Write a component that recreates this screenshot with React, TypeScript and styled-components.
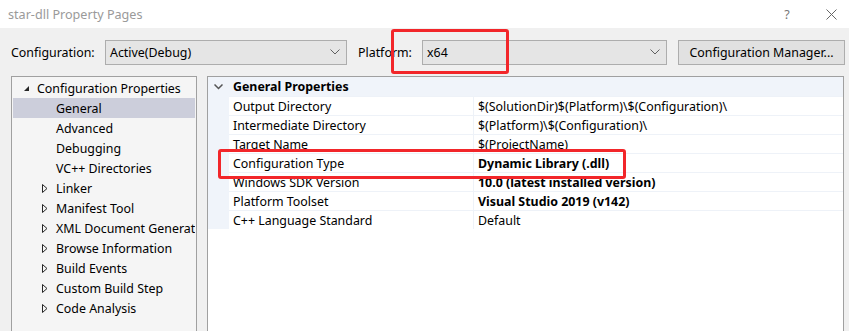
import React from "react";
import styled, { createGlobalStyle } from "styled-components";

const Global = createGlobalStyle`
  html, body { margin: 0; padding: 0; background: #f0f0f0; }
  body { font-family: "Noto Sans", "Open Sans", sans-serif; font-size: 12.4px; color: #000; }
`;

const Window = styled.div`
  position: relative;
  width: 849px;
  height: 331px;
  overflow: hidden;
  background: #f0f0f0;
`;

const TitleBar = styled.div`
  height: 28px;
  background: #fff;
  display: flex;
  align-items: center;
  padding: 0 0 0 8px;
  color: #9a9a9a;
  font-size: 12.6px;
`;

const Title = styled.div`
  flex: 1;
`;

const TitleBtn = styled.div<{ $w: number; $ml?: number }>`
  width: ${(p) => p.$w}px;
  margin-left: ${(p) => p.$ml || 0}px;
  display: flex;
  justify-content: center;
  align-items: center;
  color: #777;
`;

const Toolbar = styled.div`
  height: 48px;
  display: flex;
  align-items: center;
  padding: 0 0 0 11px;
  box-sizing: border-box;
`;

const Label = styled.div<{ $w: number }>`
  width: ${(p) => p.$w}px;
  flex: none;
`;

const Select = styled.div<{ $w: number; $mr: number }>`
  width: ${(p) => p.$w}px;
  margin-right: ${(p) => p.$mr}px;
  height: 25px;
  box-sizing: border-box;
  border: 1px solid #adadad;
  background: #e5e5e5;
  display: flex;
  align-items: center;
  padding: 0 6px 0 4px;
  flex: none;
`;

const SelectText = styled.span`
  flex: 1;
`;

const Button = styled.div`
  width: 167px;
  height: 25px;
  box-sizing: border-box;
  border: 1px solid #adadad;
  background: #e1e1e1;
  display: flex;
  align-items: center;
  justify-content: center;
  flex: none;
`;

const Main = styled.div`
  display: flex;
  gap: 10px;
  padding: 0 5px 0 11px;
`;

const Tree = styled.div`
  width: 186px;
  height: 280px;
  box-sizing: border-box;
  border: 1px solid #a0a0a0;
  background: #f5f5f5;
  padding: 1px 1px 0 1px;
  flex: none;
`;

const TreeRow = styled.div<{ $indent: number; $sel?: boolean }>`
  height: 20px;
  display: flex;
  align-items: center;
  padding-left: ${(p) => p.$indent}px;
  background: ${(p) => (p.$sel ? "#cccedb" : "transparent")};
  white-space: nowrap;
  overflow: hidden;
`;

const Twisty = styled.span`
  width: 14px;
  flex: none;
  display: flex;
  align-items: center;
`;

const Grid = styled.div`
  flex: 1;
  height: 280px;
  box-sizing: border-box;
  border: 1px solid #a0a0a0;
  background: #fff;
  display: grid;
  grid-template-columns: 21px 245px 1fr;
  grid-auto-rows: 19px;
  align-content: start;
`;

const Gutter = styled.div`
  background: #f0f4fa;
  display: flex;
  align-items: center;
  justify-content: center;
`;

const HeaderCell = styled.div`
  grid-column: 2 / 4;
  background: #f0f4fa;
  font-weight: bold;
  display: flex;
  align-items: center;
  padding-left: 4px;
`;

const Cell = styled.div<{ $bold?: boolean; $val?: boolean }>`
  display: flex;
  align-items: center;
  padding-left: 4px;
  box-sizing: border-box;
  border-top: 1px solid #eef2f8;
  border-right: ${(p) => (p.$val ? "none" : "1px solid #eef2f8")};
  font-weight: ${(p) => (p.$bold ? "bold" : "normal")};
  white-space: nowrap;
  overflow: hidden;
`;

const Mark = styled.div<{ $l: number; $t: number; $w: number; $h: number }>`
  position: absolute;
  left: ${(p) => p.$l}px;
  top: ${(p) => p.$t}px;
  width: ${(p) => p.$w}px;
  height: ${(p) => p.$h}px;
  box-sizing: border-box;
  border: 3px solid #f2262a;
  border-radius: 3px;
  pointer-events: none;
`;

const Chevron = () => (
  <svg width="10" height="6" viewBox="0 0 10 6">
    <path d="M0.5 0.5 L5 5 L9.5 0.5" fill="none" stroke="#606060" strokeWidth="1" />
  </svg>
);

const Expanded = () => (
  <svg width="7" height="7" viewBox="0 0 7 7">
    <path d="M6 1 L6 6 L1 6 Z" fill="#262626" />
  </svg>
);

const Collapsed = () => (
  <svg width="6" height="9" viewBox="0 0 6 9">
    <path d="M0.5 0.5 L5 4.5 L0.5 8.5 Z" fill="none" stroke="#262626" strokeWidth="1" />
  </svg>
);

const HeaderChevron = () => (
  <svg width="9" height="6" viewBox="0 0 9 6">
    <path d="M0.5 0.5 L4.5 4.5 L8.5 0.5" fill="none" stroke="#555" strokeWidth="1.5" />
  </svg>
);

const treeChildren: { label: string; expandable: boolean; sel?: boolean }[] = [
  { label: "General", expandable: false, sel: true },
  { label: "Advanced", expandable: false },
  { label: "Debugging", expandable: false },
  { label: "VC++ Directories", expandable: false },
  { label: "Linker", expandable: true },
  { label: "Manifest Tool", expandable: true },
  { label: "XML Document Generator", expandable: true },
  { label: "Browse Information", expandable: true },
  { label: "Build Events", expandable: true },
  { label: "Custom Build Step", expandable: true },
  { label: "Code Analysis", expandable: true },
];

const props: { name: string; value: string; bold?: boolean }[] = [
  { name: "Output Directory", value: "$(SolutionDir)$(Platform)\\$(Configuration)\\" },
  { name: "Intermediate Directory", value: "$(Platform)\\$(Configuration)\\" },
  { name: "Target Name", value: "$(ProjectName)" },
  { name: "Configuration Type", value: "Dynamic Library (.dll)", bold: true },
  { name: "Windows SDK Version", value: "10.0 (latest installed version)", bold: true },
  { name: "Platform Toolset", value: "Visual Studio 2019 (v142)", bold: true },
  { name: "C++ Language Standard", value: "Default" },
];

export default function App() {
  return (
    <Window>
      <Global />
      <TitleBar>
        <Title>star-dll Property Pages</Title>
        <TitleBtn $w={44}>?</TitleBtn>
        <TitleBtn $w={36} $ml={4}>
          <svg width="11" height="11" viewBox="0 0 11 11">
            <path d="M0.5 0.5 L10.5 10.5 M10.5 0.5 L0.5 10.5" stroke="#666" strokeWidth="1" />
          </svg>
        </TitleBtn>
      </TitleBar>
      <Toolbar>
        <Label $w={94}>Configuration:</Label>
        <Select $w={242} $mr={11}>
          <SelectText>Active(Debug)</SelectText>
          <Chevron />
        </Select>
        <Label $w={64}>Platform:</Label>
        <Select $w={245} $mr={11}>
          <SelectText>x64</SelectText>
          <Chevron />
        </Select>
        <Button>Configuration Manager...</Button>
      </Toolbar>
      <Main>
        <Tree>
          <TreeRow $indent={10}>
            <Twisty>
              <Expanded />
            </Twisty>
            Configuration Properties
          </TreeRow>
          {treeChildren.map((c) => (
            <TreeRow key={c.label} $indent={29} $sel={c.sel}>
              <Twisty>{c.expandable ? <Collapsed /> : null}</Twisty>
              {c.label}
            </TreeRow>
          ))}
        </Tree>
        <Grid>
          <Gutter>
            <HeaderChevron />
          </Gutter>
          <HeaderCell>General Properties</HeaderCell>
          {props.map((p) => (
            <React.Fragment key={p.name}>
              <Gutter />
              <Cell>{p.name}</Cell>
              <Cell $val $bold={p.bold}>
                {p.value}
              </Cell>
            </React.Fragment>
          ))}
        </Grid>
      </Main>
      <Mark $l={391} $t={29} $w={118} $h={45} />
      <Mark $l={218} $t={149} $w={408} $h={30} />
    </Window>
  );
}
